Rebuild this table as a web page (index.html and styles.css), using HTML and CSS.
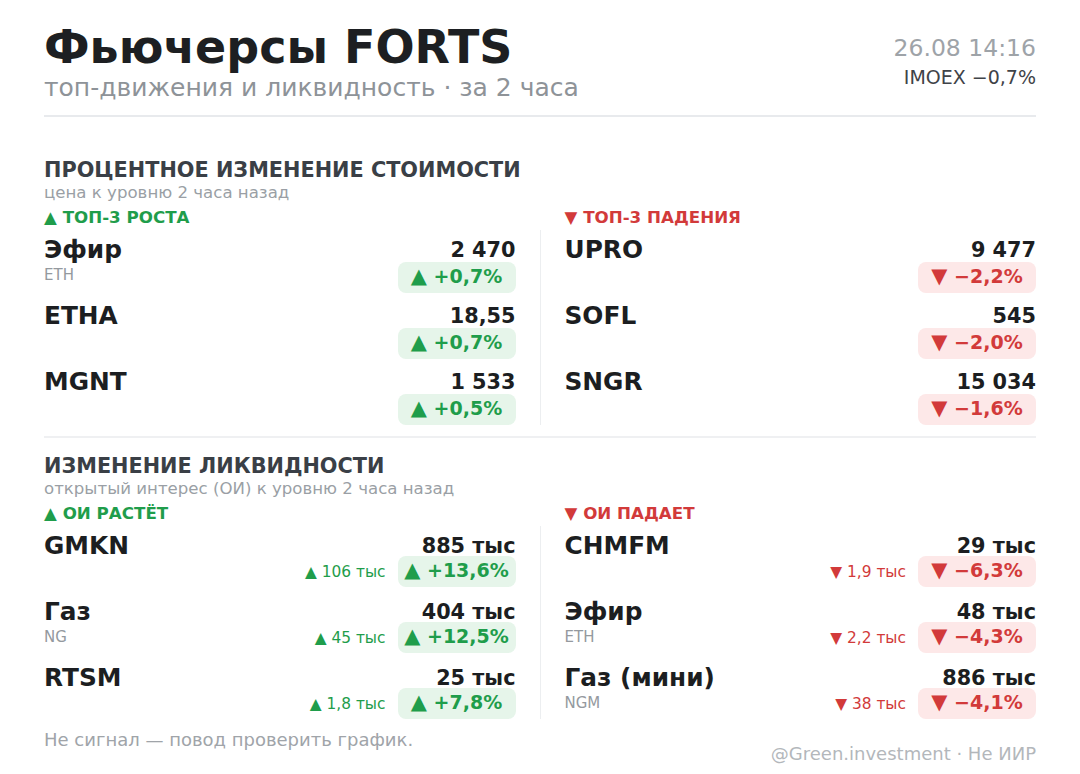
FILE: index.html
```html
<!DOCTYPE html>
<html lang="ru">
<head>
<meta charset="utf-8">
<title>Фьючерсы FORTS</title>
<link rel="stylesheet" href="styles.css">
</head>
<body>
<div class="page">
  <header class="header">
    <div class="titles">
      <h1 class="title">Фьючерсы FORTS</h1>
      <div class="subtitle">топ-движения и ликвидность · за 2 часа</div>
    </div>
    <div class="meta">
      <div class="date">26.08 14:16</div>
      <div class="index">IMOEX −0,7%</div>
    </div>
  </header>

  <section class="section section-first">
    <h2 class="sec-title">ПРОЦЕНТНОЕ ИЗМЕНЕНИЕ СТОИМОСТИ</h2>
    <div class="sec-sub">цена к уровню 2 часа назад</div>
    <div class="board">
      <div class="label up col-left">▲ ТОП-3 РОСТА</div>
      <div class="label down col-right">▼ ТОП-3 ПАДЕНИЯ</div>
      <div class="list col-left">
        <div class="row">
          <div class="name-col"><div class="name">Эфир</div><div class="ticker">ETH</div></div>
          <div class="val-col"><div class="price">2 470</div><div class="change-line"><span class="badge up"><span class="tri">▲</span> +0,7%</span></div></div>
        </div>
        <div class="row">
          <div class="name-col"><div class="name">ETHA</div></div>
          <div class="val-col"><div class="price">18,55</div><div class="change-line"><span class="badge up"><span class="tri">▲</span> +0,7%</span></div></div>
        </div>
        <div class="row">
          <div class="name-col"><div class="name">MGNT</div></div>
          <div class="val-col"><div class="price">1 533</div><div class="change-line"><span class="badge up"><span class="tri">▲</span> +0,5%</span></div></div>
        </div>
      </div>
      <div class="vline"></div>
      <div class="list col-right">
        <div class="row">
          <div class="name-col"><div class="name">UPRO</div></div>
          <div class="val-col"><div class="price">9 477</div><div class="change-line"><span class="badge down"><span class="tri">▼</span> −2,2%</span></div></div>
        </div>
        <div class="row">
          <div class="name-col"><div class="name">SOFL</div></div>
          <div class="val-col"><div class="price">545</div><div class="change-line"><span class="badge down"><span class="tri">▼</span> −2,0%</span></div></div>
        </div>
        <div class="row">
          <div class="name-col"><div class="name">SNGR</div></div>
          <div class="val-col"><div class="price">15 034</div><div class="change-line"><span class="badge down"><span class="tri">▼</span> −1,6%</span></div></div>
        </div>
      </div>
    </div>
  </section>

  <section class="section section-second">
    <h2 class="sec-title">ИЗМЕНЕНИЕ ЛИКВИДНОСТИ</h2>
    <div class="sec-sub">открытый интерес (ОИ) к уровню 2 часа назад</div>
    <div class="board board-oi">
      <div class="label up col-left">▲ ОИ РАСТЁТ</div>
      <div class="label down col-right">▼ ОИ ПАДАЕТ</div>
      <div class="list col-left">
        <div class="row">
          <div class="name-col"><div class="name">GMKN</div></div>
          <div class="val-col"><div class="price">885 тыс</div><div class="change-line"><span class="delta up">▲ 106 тыс</span><span class="badge up"><span class="tri">▲</span> +13,6%</span></div></div>
        </div>
        <div class="row">
          <div class="name-col"><div class="name">Газ</div><div class="ticker">NG</div></div>
          <div class="val-col"><div class="price">404 тыс</div><div class="change-line"><span class="delta up">▲ 45 тыс</span><span class="badge up"><span class="tri">▲</span> +12,5%</span></div></div>
        </div>
        <div class="row">
          <div class="name-col"><div class="name">RTSM</div></div>
          <div class="val-col"><div class="price">25 тыс</div><div class="change-line"><span class="delta up">▲ 1,8 тыс</span><span class="badge up"><span class="tri">▲</span> +7,8%</span></div></div>
        </div>
      </div>
      <div class="vline"></div>
      <div class="list col-right">
        <div class="row">
          <div class="name-col"><div class="name">CHMFM</div></div>
          <div class="val-col"><div class="price">29 тыс</div><div class="change-line"><span class="delta down">▼ 1,9 тыс</span><span class="badge down"><span class="tri">▼</span> −6,3%</span></div></div>
        </div>
        <div class="row">
          <div class="name-col"><div class="name">Эфир</div><div class="ticker">ETH</div></div>
          <div class="val-col"><div class="price">48 тыс</div><div class="change-line"><span class="delta down">▼ 2,2 тыс</span><span class="badge down"><span class="tri">▼</span> −4,3%</span></div></div>
        </div>
        <div class="row">
          <div class="name-col"><div class="name">Газ (мини)</div><div class="ticker">NGM</div></div>
          <div class="val-col"><div class="price">886 тыс</div><div class="change-line"><span class="delta down">▼ 38 тыс</span><span class="badge down"><span class="tri">▼</span> −4,1%</span></div></div>
        </div>
      </div>
    </div>
  </section>

  <footer class="footer">
    <div class="note">Не сигнал — повод проверить график.</div>
    <div class="credit">@Green.investment · Не ИИР</div>
  </footer>
</div>
</body>
</html>
```

FILE: styles.css
```css
* { box-sizing: border-box; }

html, body {
  margin: 0;
  padding: 0;
  background: #ffffff;
}

body {
  font-family: "DejaVu Sans", "Noto Sans", sans-serif;
  color: #1c1e21;
  width: 1080px;
  height: 774px;
  overflow: hidden;
}

.page {
  padding: 21px 44px 0 44px;
}

/* header */
.header {
  display: flex;
  justify-content: space-between;
  align-items: flex-start;
  padding-bottom: 13px;
  border-bottom: 2px solid #e8eaed;
}

.title {
  margin: 0;
  font-size: 46px;
  line-height: 53px;
  font-weight: 700;
  color: #1d1f22;
}

.subtitle {
  font-size: 25px;
  line-height: 28px;
  color: #8e9398;
}

.meta {
  margin-top: 13px;
  text-align: right;
}

.date {
  font-size: 23.5px;
  line-height: 28px;
  color: #9ea3a8;
}

.index {
  margin-top: 4px;
  font-size: 19px;
  line-height: 22px;
  color: #3f4348;
}

/* sections */
.section-first {
  padding-top: 40px;
  padding-bottom: 11px;
  border-bottom: 2px solid #eff0f2;
}

.section-second {
  padding-top: 15px;
}

.sec-title {
  margin: 0;
  font-size: 20.8px;
  line-height: 26px;
  font-weight: 700;
  color: #3a3f46;
}

.sec-sub {
  font-size: 16.6px;
  line-height: 20px;
  color: #9a9fa5;
}

.board {
  display: grid;
  grid-template-columns: 1fr 1px 1fr;
  column-gap: 24px;
  margin-top: 4px;
}

.col-left { grid-column: 1; }
.col-right { grid-column: 3; }

.label {
  grid-row: 1;
  font-size: 16.7px;
  line-height: 20px;
  font-weight: 700;
}

.up { color: #1f9d4b; }
.down { color: #d23a3a; }

.vline {
  grid-column: 2;
  grid-row: 2;
  background: #eceef0;
  margin-top: 3px;
}

.list {
  grid-row: 2;
  margin-top: 3px;
  padding-top: 8px;
  display: flex;
  flex-direction: column;
  gap: 11px;
}

.board-oi .list {
  gap: 13px;
}

.row {
  display: flex;
  justify-content: space-between;
  align-items: flex-start;
}

.name {
  font-size: 24.8px;
  line-height: 24px;
  font-weight: 700;
  color: #1c1e21;
}

.ticker {
  margin-top: 4px;
  font-size: 15px;
  line-height: 18px;
  color: #94999e;
}

.val-col {
  display: flex;
  flex-direction: column;
  align-items: flex-end;
}

.price {
  font-size: 20.8px;
  line-height: 24px;
  font-weight: 700;
  color: #1c1e21;
}

.change-line {
  display: flex;
  align-items: center;
  gap: 12px;
}

.board-oi .change-line {
  margin-top: -2px;
}

.badge {
  width: 118px;
  height: 31px;
  border-radius: 8px;
  font-size: 19px;
  line-height: 29px;
  font-weight: 700;
  text-align: center;
  white-space: nowrap;
}

.tri {
  font-size: 21px;
}

.badge.up { background: #e6f5ea; }
.badge.down { background: #fde8e8; }

.delta {
  font-size: 15.4px;
  line-height: 18px;
}

/* footer */
.footer {
  display: flex;
  justify-content: space-between;
  align-items: flex-start;
  margin-top: 11px;
}

.note {
  font-size: 18px;
  line-height: 20px;
  color: #a0a4a9;
}

.credit {
  margin-top: 14px;
  font-size: 18px;
  line-height: 20px;
  color: #b3b7bb;
}
```
